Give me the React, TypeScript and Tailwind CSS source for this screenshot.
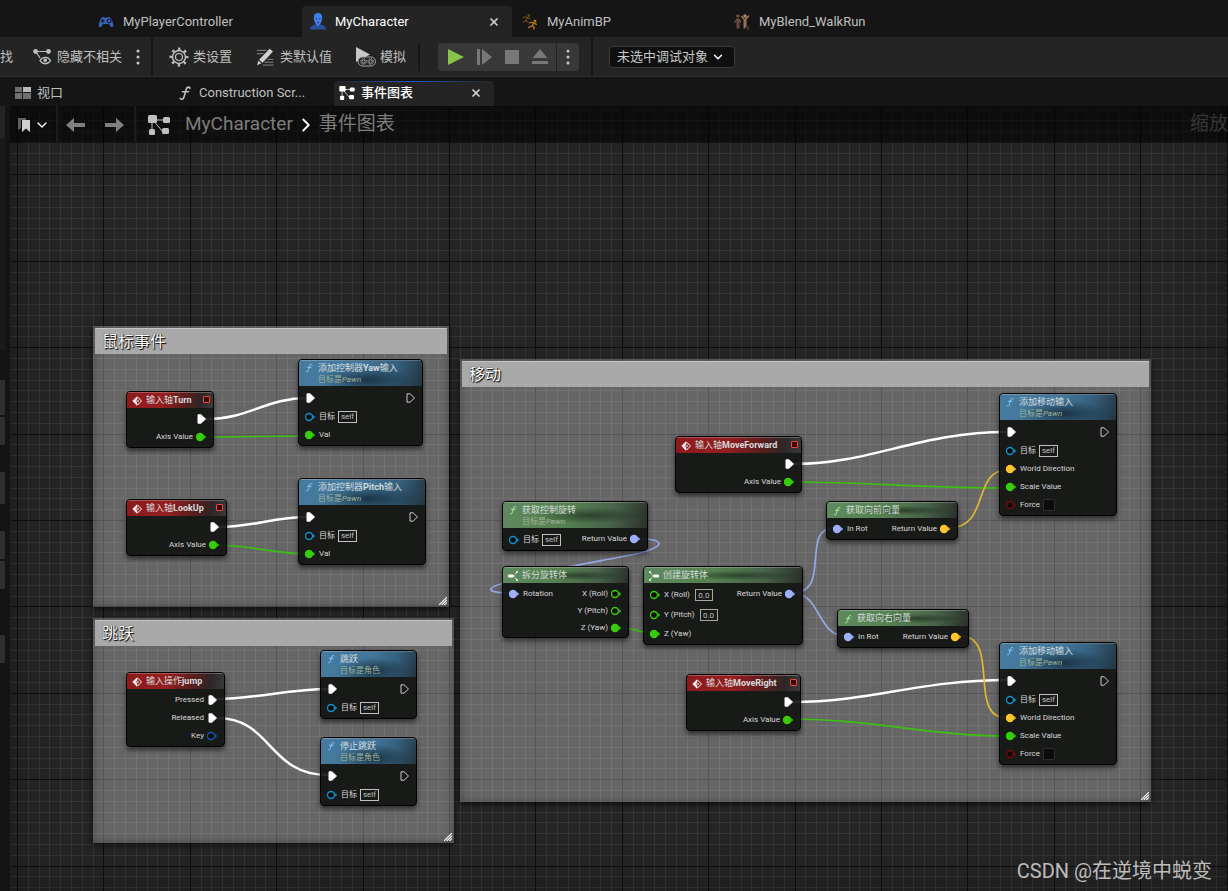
import type { ReactNode } from "react";
import { ChevronDown, ChevronRight, X } from "lucide-react";

type Tone = "event" | "call" | "pure";

const headerTone: Record<Tone, string> = {
  event: "bg-[linear-gradient(100deg,#8c1a1c_0%,#951f20_40%,#5a1d1d_68%,#2e2626_85%,#3a3a3a_100%)]",
  call: "bg-[radial-gradient(ellipse_at_55%_75%,rgba(18,36,50,0.8)_0%,rgba(18,36,50,0)_50%),linear-gradient(110deg,#467b9f_0%,#42769a_50%,#35607e_75%,#22343f_100%)]",
  pure: "bg-[radial-gradient(ellipse_at_60%_50%,rgba(20,34,20,0.6)_0%,rgba(20,34,20,0)_45%),linear-gradient(105deg,#5f8a5f_0%,#55804f_45%,#48634a_75%,#2a302a_100%)]",
};

const pinColor = {
  float: "#37cd0a",
  object: "#1490cd",
  rotator: "#9db0fb",
  vector: "#fdc62c",
  bool: "#7a0808",
  key: "#0c59b5",
};

type PinKind = "exec" | keyof typeof pinColor;

/* ---------- icons ---------- */

function GraphIcon({ className }: { className: string }) {
  return (
    <svg viewBox="0 0 22 20" className={className} fill="currentColor">
      <path d="M5 5h13M5 5l10 12M4 5v12" stroke="currentColor" strokeWidth="1" fill="none" />
      <rect x="0" y="0" width="9" height="8" rx="1.500" />
      <rect x="15" y="2" width="7" height="6" rx="1.500" />
      <rect x="1" y="14" width="6" height="6" rx="1.500" />
      <rect x="14" y="13" width="7" height="6" rx="1.500" />
    </svg>
  );
}

function FunctionIcon({ className }: { className: string }) {
  return (
    <svg viewBox="0 0 16 16" className={className} fill="none" stroke="currentColor" strokeWidth="1.600" strokeLinecap="round">
      <path d="M13 3.200C12.600 1.600 10 1.600 9.300 4L6.800 12.400C6.200 14.500 4 14.800 3.200 13.400" />
      <path d="M5.500 6.800h6" />
    </svg>
  );
}

function GamepadIcon() {
  return (
    <svg viewBox="0 0 16 16" className="size-4 shrink-0">
      <path d="M4 3.500c1.200-.8 2.300-.5 2.800.3h2.400c.5-.8 1.600-1.100 2.800-.3 1.800 1.500 3.200 5 3.300 8 0 1.800-1.700 2-2.700.9L10.800 10H5.200l-1.800 2.400C2.400 13.500.7 13.300.7 11.500.8 8.500 2.200 5 4 3.500z" fill="#3563b8" />
      <path d="M3 7h3.600M4.800 5.200v3.600" stroke="#151515" strokeWidth="1.100" />
      <circle cx="11.200" cy="7" r="1.900" fill="none" stroke="#151515" strokeWidth="1" />
    </svg>
  );
}

function PawnIcon() {
  return (
    <svg viewBox="0 0 16 17" className="h-[17px] w-4 shrink-0">
      <path d="M0 16.500c.3-3.500 3-4.600 5.500-5h5c2.500.4 5.200 1.500 5.500 5z" fill="#2a4f9c" />
      <path d="M8 0c2.900 0 4.400 2 4.200 4.900C12 8 10.400 11.500 8 13.300 5.600 11.500 4 8 3.800 4.900 3.600 2 5.100 0 8 0z" fill="#3f80ee" />
      <path d="M5.700 5.800h1.500M8.800 5.800h1.500M7 9.600h2" stroke="#1c3c80" strokeWidth="1" />
    </svg>
  );
}

function RunnersIcon() {
  return (
    <svg viewBox="0 0 16 16" className="size-4 shrink-0" fill="none" strokeLinecap="round" strokeLinejoin="round">
      <g stroke="#6d4818" strokeWidth="1.200">
        <circle cx="6.800" cy="1.600" r=".8" fill="#6d4818" />
        <path d="M1 3.500l2.500-.7 2 .8-1.600 3L6 8M5.500 3.600L8 4.800M3.900 6.600L1 8" />
      </g>
      <g stroke="#c07a1c" strokeWidth="1.200">
        <circle cx="13" cy="7" r=".9" fill="#c07a1c" />
        <path d="M7.300 9l2.500-.8 2 .9-1.700 2.700 2 1.300-.3 2.200M11.800 9.100l2.600 1.300M10.100 11.800L6.600 13.600" />
      </g>
    </svg>
  );
}

function BlendIcon() {
  return (
    <svg viewBox="0 0 16 16" className="size-4 shrink-0" fill="none" strokeLinecap="round">
      <g stroke="#7d5846" strokeWidth="1.200">
        <circle cx="3.900" cy="2" r="1" fill="#7d5846" />
        <path d="M3.200 5v9M4.800 5v9M3 5L.8 8.500M5 5l1.500 3" />
      </g>
      <g stroke="#b98663" strokeWidth="1.200">
        <circle cx="11" cy="2" r="1.100" fill="#b98663" />
        <path d="M10.200 5v9M11.800 5v8M10 5L7.600 2.300M12 5l2.600-3" />
      </g>
      <path d="M14 13v2.500" stroke="#8a5a3a" />
    </svg>
  );
}

function DotsIcon() {
  return (
    <svg viewBox="0 0 4 18" className="h-[18px] w-1" fill="#c8c8c8">
      <circle cx="2" cy="3" r="1.500" />
      <circle cx="2" cy="9" r="1.500" />
      <circle cx="2" cy="15" r="1.500" />
    </svg>
  );
}

function HideUnrelatedIcon() {
  return (
    <svg viewBox="0 0 18 18" className="size-[18px] shrink-0" fill="none" stroke="#c0c0c0">
      <circle cx="2.600" cy="3.500" r="2.400" fill="#c0c0c0" stroke="none" />
      <circle cx="15.500" cy="3.500" r="2.400" fill="#c0c0c0" stroke="none" />
      <path d="M3 3.500h12M3 4l4 6" strokeWidth="1.200" />
      <path d="M7 12.500c2.500-4.300 8-4.300 10.500 0-2.500 4.300-8 4.300-10.500 0z" strokeWidth="1.300" />
      <circle cx="12.200" cy="12.300" r="1.800" fill="#c0c0c0" stroke="none" />
    </svg>
  );
}

function GearIcon() {
  return (
    <svg viewBox="0 0 20 20" className="size-5 shrink-0" fill="none" stroke="#c0c0c0">
      <circle cx="10" cy="10" r="8.200" strokeWidth="2.600" strokeDasharray="2.400 4.040" strokeDashoffset="1.200" />
      <circle cx="10" cy="10" r="6.500" strokeWidth="1.400" />
      <circle cx="10" cy="10" r="3.500" strokeWidth="1.200" />
    </svg>
  );
}

function DefaultsIcon() {
  return (
    <svg viewBox="0 0 19 19" className="size-[18px] shrink-0">
      <path d="M1 2.500h10M1 6h7M12 12h6.500M9 15h9.500M7 18h11.500" stroke="#8c8c8c" strokeWidth="1" />
      <path d="M14.300.8l3.600 3L7 15.600l-3.800-3.200z" fill="#d0d0d0" />
      <path d="M2.500 13.500l3.200 2.700-4.600 2z" fill="#d0d0d0" />
    </svg>
  );
}

function SimulateIcon() {
  return (
    <svg viewBox="0 0 20 20" className="size-5 shrink-0" fill="none">
      <path d="M0 0l14 7.500L0 15z" fill="#c8c8c8" />
      <rect x="2" y="10" width="17.500" height="9" rx="4.500" fill="#242424" stroke="#b0b0b0" strokeWidth=".9" />
      <g stroke="#b0b0b0">
        <circle cx="7.500" cy="14.500" r="1.800" />
        <circle cx="14.500" cy="14.500" r="1.800" />
        <circle cx="7.500" cy="14.500" r="2.900" strokeDasharray="1 1.300" />
        <circle cx="14.500" cy="14.500" r="2.900" strokeDasharray="1 1.300" />
      </g>
    </svg>
  );
}

function ArrowIcon({ flip = false }: { flip?: boolean }) {
  return (
    <svg viewBox="0 0 20 14" className={flip ? "h-3.5 w-5 -scale-x-100" : "h-3.5 w-5"} fill="#808080">
      <path d="M0 7l8-7v5h11v4H8v5z" />
    </svg>
  );
}

/* ---------- chrome ---------- */

function FileTab({ icon, label, active = false }: { icon: ReactNode; label: string; active?: boolean }) {
  return (
    <div
      className={`flex h-[31px] w-[210px] shrink-0 items-center px-2 ${
        active ? "rounded-t bg-[#242424] text-white" : "text-[#c0c0c0]"
      }`}
    >
      <button className="flex flex-1 items-center gap-[9px]">
        {icon}
        {label}
      </button>
      {active && (
        <button aria-label="关闭" className="mr-1 text-[#d0d0d0]">
          <X className="size-3" strokeWidth={3.5} />
        </button>
      )}
    </div>
  );
}

function GraphTab({ icon, label, active = false }: { icon: ReactNode; label: string; active?: boolean }) {
  return (
    <div
      className={`relative flex h-[25px] w-40 shrink-0 items-center px-[5px] pb-0.5 ${
        active ? "overflow-hidden rounded-t bg-[#242424] font-medium text-white" : "text-[#c0c0c0]"
      }`}
    >
      {active && <span className="absolute inset-x-0 top-0 h-px bg-linear-to-r from-transparent via-[#1d5cc8] to-transparent" />}
      <button className="flex flex-1 items-center gap-1.5">
        {icon}
        {label}
      </button>
      {active && (
        <button aria-label="关闭" className="mr-[7px] text-[#d0d0d0]">
          <X className="size-3" strokeWidth={3.5} />
        </button>
      )}
    </div>
  );
}

function Toolbar() {
  return (
    <div className="flex h-10 items-center overflow-hidden border-b border-[#2c2c2c] bg-[#242424] text-[#c0c0c0]">
      <button className="shrink-0">找</button>
      <button className="ml-5 flex shrink-0 items-center gap-1.5">
        <HideUnrelatedIcon />
        隐藏不相关
      </button>
      <button aria-label="更多" className="ml-3.5">
        <DotsIcon />
      </button>
      <span className="ml-[11px] h-full w-0.5 bg-[#161616]" />
      <button className="ml-4 flex shrink-0 items-center gap-1">
        <GearIcon />
        类设置
      </button>
      <button className="ml-6 flex shrink-0 items-center gap-1.5">
        <DefaultsIcon />
        类默认值
      </button>
      <button className="ml-6 flex shrink-0 items-center gap-1">
        <SimulateIcon />
        模拟
      </button>
      <span className="ml-3 h-7 w-0.5 bg-[#161616]" />
      <div className="ml-[18px] flex h-7 shrink-0 items-center rounded bg-[#383838] pl-1">
        <button aria-label="播放" className="flex w-7 justify-center">
          <svg viewBox="0 0 16 18" className="h-[18px] w-4">
            <path d="M0 1l16 8-16 8z" fill="#8bc24a" />
          </svg>
        </button>
        <button aria-label="跳帧" className="flex w-7 justify-center">
          <svg viewBox="0 0 16 16" className="size-4" fill="#787878">
            <path d="M1 0h3v16H1zM6 0l10 8-10 8z" />
          </svg>
        </button>
        <button aria-label="停止" className="flex w-7 justify-center">
          <span className="size-3.5 bg-[#787878]" />
        </button>
        <button aria-label="弹出" className="flex w-7 justify-center">
          <svg viewBox="0 0 16 15" className="h-[15px] w-4" fill="#787878">
            <path d="M8 0l7.500 9H.5zM0 12h16v3H0z" />
          </svg>
        </button>
        <button aria-label="播放选项" className="ml-0.5 flex h-7 w-[23px] items-center justify-center border-l border-[#222]">
          <DotsIcon />
        </button>
      </div>
      <span className="ml-3 h-full w-0.5 bg-[#161616]" />
      <div className="relative ml-4 shrink-0">
        <select
          aria-label="调试对象"
          className="h-[22px] w-[126px] appearance-none rounded border border-[#3a3a3a] bg-[#0f0f0f] pl-[7px] text-[13px] text-[#c8c8c8]"
        >
          <option>未选中调试对象</option>
        </select>
        <ChevronDown className="pointer-events-none absolute top-1 right-2.5 size-3.5 text-white" strokeWidth={2.5} />
      </div>
    </div>
  );
}

function Breadcrumb() {
  return (
    <div className="absolute inset-x-0 top-0 flex h-[37px] items-center overflow-hidden bg-black/60 text-[19px] text-[#7d7d7d]">
      <button aria-label="书签" className="ml-2 flex items-center gap-1 text-white">
        <svg viewBox="0 0 12 14" className="h-3.5 w-3">
          <path d="M0 0h8v2H3v8l-3 2z" fill="#606060" />
          <path d="M4 2h8v12l-4-3.500L4 14z" fill="#d0d0d0" />
        </svg>
        <ChevronDown className="size-4" strokeWidth={2} />
      </button>
      <span className="ml-1.5 h-full w-0.5 bg-[#1c1c1c]" />
      <button aria-label="后退" className="ml-2">
        <ArrowIcon />
      </button>
      <button aria-label="前进" className="ml-[18px]">
        <ArrowIcon flip />
      </button>
      <span className="ml-2.5 h-full w-0.5 bg-[#1c1c1c]" />
      <GraphIcon className="ml-3 h-5 w-[22px] shrink-0 text-[#c0c0c0]" />
      <a href="#character" className="ml-[15px]">
        MyCharacter
      </a>
      <ChevronRight className="mx-0.5 size-[22px] text-white" strokeWidth={2} />
      <a href="#graph" className="shrink-0">
        事件图表
      </a>
      <span className="ml-auto shrink-0 text-[#363636]">缩放</span>
    </div>
  );
}

/* Edge of the side panel that is scrolled out of the window */
function SidePanelEdge() {
  return (
    <div className="w-2.5 shrink-0 bg-[#141414] pr-[5px]">
      <div className="h-8 bg-[#242424]" />
      <div className="h-[212px] bg-[#1a1a1a]" />
      <div className="mt-[30px] h-[35px] bg-[#2f2f2f]" />
      <div className="mt-0.5 h-7 bg-[#2f2f2f]" />
      <div className="mt-[27px] h-8 bg-[#2f2f2f]" />
      <div className="mt-[27px] h-7 bg-[#2f2f2f]" />
      <div className="mt-0.5 h-7 bg-[#2f2f2f]" />
      <div className="mt-[46px] h-7 bg-[#2f2f2f]" />
    </div>
  );
}

/* ---------- graph ---------- */

const GRID_STEP = 10.8;
const gridLines = Array.from({ length: 260 }, (_, i) => i);

function Grid() {
  const minor = gridLines.filter((i) => i % 8 !== 0);
  const major = gridLines.filter((i) => i % 8 === 0);
  const path = (list: number[]) =>
    list
      .map((i) => `M${Math.round(7 + i * GRID_STEP)} 0v2400M0 ${Math.round(-18 + i * GRID_STEP)}h2800`)
      .join("");
  return (
    <svg className="absolute inset-0 size-full" shapeRendering="crispEdges" fill="none">
      <g transform="translate(.5 .5)">
        <path d={path(minor)} stroke="#353535" />
        <path d={path(major)} stroke="#0e0e0e" />
      </g>
    </svg>
  );
}

function Wires() {
  return (
    <svg className="absolute inset-0 size-full" fill="none" strokeLinecap="round">
      <g stroke="#fff" strokeWidth="2.500">
        <path d="M196 313C240 313 255 292 298 292" />
        <path d="M209 421C245 421 262 411 298 411" />
        <path d="M207 593C245 593 280 583 318 583" />
        <path d="M207 612C262 612 258 669 318 669" />
        <path d="M785 358C860 358 910 326 997 326" />
        <path d="M783 596C860 596 910 574 997 574" />
      </g>
      <g stroke="#3bc011" strokeWidth="1.700">
        <path d="M194 331C230 331 262 330 298 330" />
        <path d="M207 439C238 439 266 448 298 448" />
        <path d="M784 376C850 376 920 382 997 382" />
        <path d="M781 613C860 613 920 630 997 630" />
        <path d="M610 521C620 521 630 527 641 527" />
      </g>
      <g stroke="#95a8e6" strokeWidth="1.700">
        <path d="M629 433C655 433 656 440 630 447C595 455 545 461 512 473C470 481 475 487 500 487" />
        <path d="M783 487C822 487 790 422 824 422" />
        <path d="M783 487C810 487 808 530 835 530" />
      </g>
      <g stroke="#dfb933" strokeWidth="1.700">
        <path d="M939 422C980 422 962 364 997 364" />
        <path d="M950 530C992 530 956 612 997 612" />
      </g>
    </svg>
  );
}

function Comment({ title, className }: { title: string; className: string }) {
  return (
    <section
      className={`absolute bg-[#fff]/30 p-0.5 shadow-[0_2px_6px_rgba(0,0,0,0.7),inset_0_0_8px_rgba(0,0,0,0.35)] ${className}`}
    >
      <h2 className="flex h-[26px] items-center border-t border-[#c4c4c4] bg-[#a9a9a9] px-[7px] text-base text-white [text-shadow:1px_1px_1px_#000,0_0_1px_#000]">
        {title}
      </h2>
      <svg viewBox="0 0 9 9" className="absolute right-0.5 bottom-0.5 size-2" stroke="#fff" strokeWidth="1.200">
        <path d="M0 9L9 0M3 9l6-6M6 9l3-3" />
      </svg>
    </section>
  );
}

function PinIcon({ kind, linked }: { kind: PinKind; linked: boolean }) {
  if (kind === "exec") {
    return (
      <svg viewBox="0 0 11 10" className="h-2.5 w-[11px] shrink-0">
        <path
          d="M2 .8h3L9.500 5 5 9.200H2z"
          fill={linked ? "#fff" : "none"}
          stroke={linked ? "#fff" : "#c8c8c8"}
          strokeLinejoin="round"
        />
      </svg>
    );
  }
  const color = pinColor[kind];
  return (
    <svg viewBox="0 0 11 10" className="h-2.5 w-[11px] shrink-0">
      <circle cx="4" cy="5" r="3.500" fill={linked ? color : "#0a0d0a"} stroke={color} strokeWidth="1.400" />
      <path d="M8.200 3l2 2-2 2z" fill={color} />
    </svg>
  );
}

type PinProps = {
  kind: PinKind;
  label?: string;
  linked?: boolean;
  out?: boolean;
  height?: string;
  children?: ReactNode;
};

function Pin({ kind, label, linked = false, out = false, height = "h-[18px]", children }: PinProps) {
  return (
    <div className={`flex items-center gap-[3px] ${height} ${out ? "flex-row-reverse" : ""}`}>
      <PinIcon kind={kind} linked={linked} />
      {label && <span>{label}</span>}
      {children}
    </div>
  );
}

function SelfPin() {
  return (
    <Pin kind="object" label="目标" height="h-[19px]">
      <span className="flex h-3 w-[19px] items-center justify-center border border-[#c0c0c0] leading-none text-[#c0c0c0]">self</span>
    </Pin>
  );
}

function NumberPin({ label }: { label: string }) {
  return (
    <Pin kind="float" label={label} height="h-5">
      <input
        aria-label={label}
        defaultValue="0.0"
        className="ml-0.5 h-3 w-[18px] border border-[#a8a8a8] bg-transparent text-center leading-none text-[#c0c0c0]"
      />
    </Pin>
  );
}

function ForcePin() {
  return (
    <label className="flex items-center">
      <Pin kind="bool" label="Force">
        <input type="checkbox" className="size-3 appearance-none rounded-[1px] border border-[#2c2c2c] bg-[#0b0b0b]" />
      </Pin>
    </label>
  );
}

function HeaderIcon({ tone, variant }: { tone: Tone; variant?: "split" | "make" }) {
  if (tone === "event") {
    return (
      <svg viewBox="0 0 10 10" className="size-2.5 shrink-0" fill="none" stroke="#fff">
        <path d="M5 .7L.7 5 5 9.300V6.500H3.500v-3H5z" fill="#fff" strokeWidth=".6" />
        <path d="M5.500 1L9.500 5l-4 4M3.500 5h3.500" />
      </svg>
    );
  }
  if (variant) {
    return (
      <svg viewBox="0 0 10 10" className={`size-2.5 shrink-0 ${variant === "make" ? "-scale-x-100" : ""}`}>
        <rect x="0" y="3.500" width="5.500" height="3" rx="1" fill="#fff" />
        <path d="M5.500 5L9 1M5.500 5L9 9" stroke="#fff" strokeDasharray="1.800 1" />
        <path d="M8 1h2M8 9h2" stroke="#fff" strokeWidth="1.500" />
      </svg>
    );
  }
  return <FunctionIcon className={`size-2.5 shrink-0 ${tone === "call" ? "text-[#7fc8f5]" : "text-[#a4e8a4]"}`} />;
}

type NodeProps = {
  tone: Tone;
  title: ReactNode;
  className: string;
  target?: ReactNode;
  variant?: "split" | "make";
  delegate?: boolean;
  inputs?: ReactNode;
  outputs?: ReactNode;
};

function Node({ tone, title, className, target, variant, delegate, inputs, outputs }: NodeProps) {
  return (
    <article
      className={`absolute overflow-hidden rounded-[4px] border border-black bg-[#0f120f]/90 pb-px text-[8px] leading-none text-[#d8d8d8] shadow-[0_3px_5px_rgba(0,0,0,0.55)] ${className}`}
    >
      <header
        className={`flex gap-1 border-t border-white/25 pr-[3px] pl-[5px] ${headerTone[tone]} ${
          target ? "h-[26px] items-start pt-0.5" : "h-4 items-center"
        }`}
      >
        <HeaderIcon tone={tone} variant={variant} />
        <div className="flex-1 whitespace-nowrap">
          <h3 className="text-[9px] leading-[11px] text-[#d4dcdc]">{title}</h3>
          {target && <p className="leading-[11px] text-[#9fb39a]">目标是{target}</p>}
        </div>
        {delegate && <span className="mb-0.5 size-[7px] rounded-[1px] border border-[#f0443c] bg-[#3a0a0a]" />}
      </header>
      <div className="flex justify-between px-1.5 pt-0.5 whitespace-nowrap">
        <div>{inputs}</div>
        <div>{outputs}</div>
      </div>
    </article>
  );
}

function AxisEvent({ name, className }: { name: string; className: string }) {
  return (
    <Node
      tone="event"
      className={className}
      delegate
      title={<>输入轴<b>{name}</b></>}
      outputs={
        <>
          <Pin kind="exec" linked out />
          <Pin kind="float" label="Axis Value" linked out />
        </>
      }
    />
  );
}

type CallProps = { title: ReactNode; target: ReactNode; className: string; children?: ReactNode };

function CallNode({ title, target, className, children }: CallProps) {
  return (
    <Node
      tone="call"
      className={className}
      title={title}
      target={target}
      inputs={
        <>
          <Pin kind="exec" linked height="h-[19px]" />
          <SelfPin />
          {children}
        </>
      }
      outputs={<Pin kind="exec" out height="h-[19px]" />}
    />
  );
}

function AddMovementNode({ className }: { className: string }) {
  return (
    <CallNode className={className} title="添加移动输入" target={<i>Pawn</i>}>
      <Pin kind="vector" label="World Direction" linked />
      <Pin kind="float" label="Scale Value" linked />
      <ForcePin />
    </CallNode>
  );
}

function DirectionNode({ title, className }: { title: string; className: string }) {
  return (
    <Node
      tone="pure"
      className={className}
      title={title}
      inputs={<Pin kind="rotator" label="In Rot" linked />}
      outputs={<Pin kind="vector" label="Return Value" linked out />}
    />
  );
}

function EventGraph() {
  return (
    <main className="relative min-h-[785px] flex-1 overflow-hidden bg-[#252525]">
      <Grid />
      <div className="absolute inset-0 shadow-[inset_0_0_50px_rgba(0,0,0,0.3)]" />

      <Comment title="鼠标事件" className="top-[220px] left-[83px] h-[281px] w-[356px]" />
      <Comment title="跳跃" className="top-[512px] left-[83px] h-[225px] w-[361px]" />
      <Comment title="移动" className="top-[253px] left-[450px] h-[443px] w-[691px]" />

      <Wires />

      {/* Mouse look */}
      <AxisEvent name="Turn" className="top-[285px] left-[116px] w-[88px]" />
      <AxisEvent name="LookUp" className="top-[393px] left-[116px] w-[101px]" />
      <CallNode className="top-[253px] left-[288px] w-[125px]" title={<>添加控制器<b>Yaw</b>输入</>} target={<i>Pawn</i>}>
        <Pin kind="float" label="Val" linked />
      </CallNode>
      <CallNode className="top-[372px] left-[288px] w-[128px]" title={<>添加控制器<b>Pitch</b>输入</>} target={<i>Pawn</i>}>
        <Pin kind="float" label="Val" linked />
      </CallNode>

      {/* Jump */}
      <Node
        tone="event"
        className="top-[566px] left-[116px] w-[99px]"
        title={<>输入操作<b>jump</b></>}
        outputs={
          <>
            <Pin kind="exec" label="Pressed" linked out />
            <Pin kind="exec" label="Released" linked out />
            <Pin kind="key" label="Key" out />
          </>
        }
      />
      <CallNode className="top-[544px] left-[310px] w-[97px]" title="跳跃" target="角色" />
      <CallNode className="top-[631px] left-[310px] w-[97px]" title="停止跳跃" target="角色" />

      {/* Movement */}
      <AxisEvent name="MoveForward" className="top-[330px] left-[665px] w-[127px]" />
      <AxisEvent name="MoveRight" className="top-[568px] left-[676px] w-[115px]" />
      <Node
        tone="pure"
        className="top-[395px] left-[492px] w-[146px]"
        title="获取控制旋转"
        target={<i>Pawn</i>}
        inputs={<SelfPin />}
        outputs={<Pin kind="rotator" label="Return Value" linked out />}
      />
      <Node
        tone="pure"
        variant="split"
        className="top-[460px] left-[492px] w-[127px]"
        title="拆分旋转体"
        inputs={<Pin kind="rotator" label="Rotation" linked height="h-[17px]" />}
        outputs={
          <>
            <Pin kind="float" label="X (Roll)" out height="h-[17px]" />
            <Pin kind="float" label="Y (Pitch)" out height="h-[17px]" />
            <Pin kind="float" label="Z (Yaw)" linked out height="h-[17px]" />
          </>
        }
      />
      <Node
        tone="pure"
        variant="make"
        className="top-[460px] left-[633px] w-[160px]"
        title="创建旋转体"
        inputs={
          <>
            <NumberPin label="X (Roll)" />
            <NumberPin label="Y (Pitch)" />
            <Pin kind="float" label="Z (Yaw)" linked />
          </>
        }
        outputs={<Pin kind="rotator" label="Return Value" linked out />}
      />
      <DirectionNode title="获取向前向量" className="top-[395px] left-[816px] w-[132px]" />
      <DirectionNode title="获取向右向量" className="top-[503px] left-[827px] w-[132px]" />
      <AddMovementNode className="top-[287px] left-[989px] w-[118px]" />
      <AddMovementNode className="top-[536px] left-[989px] w-[118px]" />

      <Breadcrumb />
      <p className="absolute right-4 bottom-1.5 text-xl text-[#bdbdbd]">CSDN @在逆境中蜕变</p>
    </main>
  );
}

export default function App() {
  return (
    <div className="flex min-h-screen flex-col overflow-hidden bg-[#151515] font-['Roboto','Noto_Sans_CJK_SC',sans-serif] text-[13px]">
      <nav className="flex h-[37px] items-end gap-0.5 overflow-hidden pl-[90px]">
        <FileTab icon={<GamepadIcon />} label="MyPlayerController" />
        <FileTab icon={<PawnIcon />} label="MyCharacter" active />
        <FileTab icon={<RunnersIcon />} label="MyAnimBP" />
        <FileTab icon={<BlendIcon />} label="MyBlend_WalkRun" />
      </nav>
      <Toolbar />
      <nav className="flex h-[29px] items-end gap-0.5 overflow-hidden pl-2.5">
        <GraphTab
          icon={
            <svg viewBox="0 0 16 12" className="h-3 w-4" fill="#707070">
              <path d="M0 0h7v5H0zM0 6h7v6H0zM8 6h8v6H8z" />
              <path d="M8 0h8v5H8z" fill="#b8b8b8" />
            </svg>
          }
          label="视口"
        />
        <GraphTab icon={<FunctionIcon className="size-4" />} label="Construction Scr..." />
        <GraphTab icon={<GraphIcon className="h-3.5 w-4" />} label="事件图表" active />
      </nav>
      <div className="flex flex-1">
        <SidePanelEdge />
        <EventGraph />
      </div>
    </div>
  );
}
